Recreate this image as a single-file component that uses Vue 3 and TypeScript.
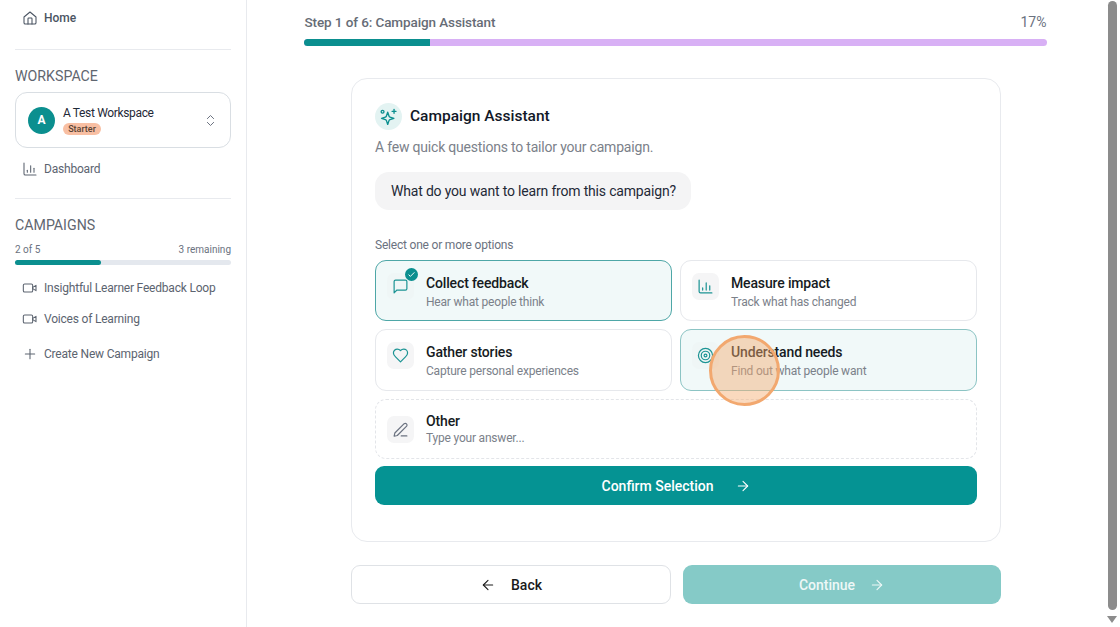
<template>
  <div class="page">
    <aside class="sidebar">
      <a class="nav home">
        <svg class="ico" viewBox="0 0 24 24"><path d="M3 10.500 12 3l9 7.500V19a2 2 0 0 1-2 2H5a2 2 0 0 1-2-2z" /><path d="M9 21v-8a1 1 0 0 1 1-1h4a1 1 0 0 1 1 1v8" /></svg>
        <span>Home</span>
      </a>
      <hr class="rule home-rule" />
      <h2 class="heading">WORKSPACE</h2>
      <div class="workspace">
        <div class="avatar">A</div>
        <div class="ws-text">
          <div class="ws-name">A Test Workspace</div>
          <span class="badge">Starter</span>
        </div>
        <svg class="updown" viewBox="0 0 24 24"><path d="m7 15 5 5 5-5" /><path d="m7 9 5-5 5 5" /></svg>
      </div>
      <a class="nav dash">
        <svg class="ico" viewBox="0 0 24 24"><path d="M3 3v16a2 2 0 0 0 2 2h16" /><path d="M8 17v-3" /><path d="M13 17V7" /><path d="M18 17v-6" /></svg>
        <span>Dashboard</span>
      </a>
      <hr class="rule" />
      <h2 class="heading camp">CAMPAIGNS</h2>
      <div class="quota"><span>2 of 5</span><span>3 remaining</span></div>
      <div class="quota-bar"><div class="quota-fill" :style="{ width: quotaPct + '%' }"></div></div>
      <a v-for="c in campaigns" :key="c" class="nav camp-item">
        <svg class="ico" viewBox="0 0 24 24"><rect x="2" y="6" width="14" height="12" rx="2" /><path d="m16 11 5-3v8l-5-3z" /></svg>
        <span>{{ c }}</span>
      </a>
      <a class="nav create">
        <svg class="ico" viewBox="0 0 24 24"><path d="M5 12h14" /><path d="M12 5v14" /></svg>
        <span>Create New Campaign</span>
      </a>
    </aside>

    <main class="main">
      <div class="steps">
        <div class="step-head">
          <span class="step-title">Step 1 of 6: Campaign Assistant</span>
          <span class="step-pct">17%</span>
        </div>
        <div class="step-bar"><div class="step-fill"></div></div>
      </div>

      <section class="card">
        <div class="card-head">
          <div class="spark">
            <svg viewBox="0 0 24 24"><path d="M11 6.500 12.600 11.400a2 2 0 0 0 1.300 1.300L18.800 14.300 13.900 15.900a2 2 0 0 0-1.300 1.300L11 22l-1.600-4.800a2 2 0 0 0-1.300-1.300L3.200 14.300l4.900-1.600a2 2 0 0 0 1.300-1.300z" /><path d="M19 3v5" /><path d="M16.500 5.500h5" /><circle cx="4.500" cy="6" r="1.800" /></svg>
          </div>
          <h1>Campaign Assistant</h1>
        </div>
        <p class="sub">A few quick questions to tailor your campaign.</p>
        <div class="bubble">What do you want to learn from this campaign?</div>
        <div class="hint">Select one or more options</div>

        <div class="options">
          <div v-for="o in options" :key="o.title" class="option" :class="o.state">
            <div class="opt-icon">
              <svg v-if="o.icon === 'chat'" viewBox="0 0 24 24"><path d="M21 15a2 2 0 0 1-2 2H7l-4 4V5a2 2 0 0 1 2-2h14a2 2 0 0 1 2 2z" /></svg>
              <svg v-else-if="o.icon === 'chart'" viewBox="0 0 24 24"><path d="M3 3v16a2 2 0 0 0 2 2h16" /><path d="M8 17v-3" /><path d="M13 17V7" /><path d="M18 17v-6" /></svg>
              <svg v-else-if="o.icon === 'heart'" viewBox="0 0 24 24"><path d="M19 14c1.500-1.500 3-3.200 3-5.500A5.500 5.500 0 0 0 16.500 3c-1.800 0-3 .5-4.500 2-1.500-1.500-2.700-2-4.500-2A5.500 5.500 0 0 0 2 8.500c0 2.300 1.500 4 3 5.500l7 7z" /></svg>
              <svg v-else viewBox="0 0 24 24"><circle cx="12" cy="12" r="10" /><circle cx="12" cy="12" r="6" /><circle cx="12" cy="12" r="2" /></svg>
              <span v-if="o.state === 'checked'" class="tick">
                <svg viewBox="0 0 24 24"><path d="M5 13l4 4L19 7" /></svg>
              </span>
            </div>
            <div>
              <div class="opt-title">{{ o.title }}</div>
              <div class="opt-desc">{{ o.desc }}</div>
            </div>
          </div>
        </div>

        <div class="option other">
          <div class="opt-icon pencil">
            <svg viewBox="0 0 24 24"><path d="M13 21h8" /><path d="M17.200 3.800a2.500 2.500 0 0 1 3.500 3.500L7.500 20.500 3 21.500l1-4.500z" /></svg>
          </div>
          <div>
            <div class="opt-title">Other</div>
            <div class="opt-desc tight">Type your answer...</div>
          </div>
        </div>

        <button class="confirm">
          <span>Confirm Selection</span>
          <svg viewBox="0 0 24 24"><path d="M5 12h14" /><path d="m12 5 7 7-7 7" /></svg>
        </button>
      </section>

      <div class="footer">
        <button class="back">
          <svg viewBox="0 0 24 24"><path d="m12 19-7-7 7-7" /><path d="M19 12H5" /></svg>
          <span>Back</span>
        </button>
        <button class="continue">
          <span>Continue</span>
          <svg viewBox="0 0 24 24"><path d="M5 12h14" /><path d="m12 5 7 7-7 7" /></svg>
        </button>
      </div>
    </main>

    <div class="click-mark"></div>
    <div class="scroll-thumb"></div>
    <div class="scroll-arrow"></div>
  </div>
</template>

<script setup lang="ts">
const quotaPct = 40

const campaigns: string[] = ['Insightful Learner Feedback Loop', 'Voices of Learning']

interface Option {
  title: string
  desc: string
  icon: string
  state: string
}

const options: Option[] = [
  { title: 'Collect feedback', desc: 'Hear what people think', icon: 'chat', state: 'checked' },
  { title: 'Measure impact', desc: 'Track what has changed', icon: 'chart', state: '' },
  { title: 'Gather stories', desc: 'Capture personal experiences', icon: 'heart', state: '' },
  { title: 'Understand needs', desc: 'Find out what people want', icon: 'target', state: 'hovered' },
]
</script>

<style>
html,
body {
  margin: 0;
  background: #fff;
  overflow: hidden;
}
</style>

<style scoped>
.page {
  position: relative;
  display: flex;
  width: 1120px;
  height: 627px;
  overflow: hidden;
  font-family: Roboto, "Noto Sans", sans-serif;
  color: #111827;
  background: #fff;
}
svg {
  fill: none;
  stroke: currentColor;
  stroke-width: 2;
  stroke-linecap: round;
  stroke-linejoin: round;
}

/* sidebar */
.sidebar {
  width: 247px;
  box-sizing: border-box;
  flex: none;
  padding: 0 15px;
  border-right: 1px solid #e8eaee;
}
.nav {
  display: flex;
  align-items: center;
  gap: 6px;
  height: 20px;
  padding-left: 7px;
  font-size: 12px;
  letter-spacing: -0.2px;
  color: #5c6470;
}
.ico {
  width: 16px;
  height: 16px;
  flex: none;
  stroke-width: 1.600;
}
.home {
  margin-top: 8px;
  font-weight: 500;
  letter-spacing: 0;
  color: #4b5563;
}
.rule {
  margin: 0;
  border: 0;
  border-top: 1px solid #e8eaee;
}
.home-rule {
  margin-top: 21px;
}
.heading {
  margin: 17px 0 0;
  font-size: 14.200px;
  line-height: 19px;
  font-weight: 400;
  color: #5f6670;
}
.workspace {
  display: flex;
  align-items: center;
  box-sizing: border-box;
  height: 56px;
  margin-top: 6px;
  padding: 0 12px;
  border: 1px solid #d9dee3;
  border-radius: 12px;
}
.avatar {
  width: 27px;
  height: 27px;
  flex: none;
  border-radius: 50%;
  background: #0b8f8f;
  color: #fff;
  font-size: 12px;
  font-weight: 700;
  line-height: 27px;
  text-align: center;
}
.ws-text {
  flex: 1;
  margin-left: 8px;
}
.ws-name {
  font-size: 12px;
  line-height: 16px;
  letter-spacing: -0.350px;
  color: #1f2937;
}
.badge {
  display: block;
  width: 38px;
  height: 12px;
  margin-top: 2px;
  border-radius: 6px;
  background: #f8bfa3;
  color: #5a4334;
  font-size: 9px;
  font-weight: 500;
  line-height: 12px;
  text-align: center;
}
.updown {
  width: 15px;
  height: 15px;
  color: #6b7280;
  stroke-width: 1.600;
}
.dash {
  margin-top: 11px;
  margin-bottom: 19px;
}
.camp {
  margin-top: 17px;
}
.quota {
  display: flex;
  justify-content: space-between;
  margin-top: 8px;
  font-size: 10px;
  line-height: 14px;
  color: #6b7280;
}
.quota-bar {
  height: 5px;
  margin-top: 3px;
  border-radius: 3px;
  background: #e4e8ee;
}
.quota-fill {
  height: 100%;
  border-radius: 3px;
  background: #0b8f8f;
}
.camp-item {
  margin-top: 11px;
}
.quota-bar + .camp-item {
  margin-top: 13px;
}
.create {
  margin-top: 15px;
}

/* main */
.main {
  width: 858px;
  flex: none;
  display: flex;
  flex-direction: column;
  align-items: center;
}
.steps {
  width: 743px;
  margin-top: 13px;
  margin-right: 2px;
}
.step-head {
  display: flex;
  justify-content: space-between;
  font-size: 14px;
  line-height: 18px;
}
.step-title {
  padding-left: 1px;
  font-size: 13.500px;
  font-weight: 500;
  letter-spacing: -0.100px;
  color: #666c76;
}
.step-pct {
  color: #6b7280;
}
.step-bar {
  height: 7px;
  margin-top: 8px;
  border-radius: 4px;
  background: #d8b0f5;
  overflow: hidden;
}
.step-fill {
  width: 17%;
  height: 100%;
  background: #0b8f8f;
}
.card {
  box-sizing: border-box;
  width: 650px;
  height: 464px;
  margin-top: 32px;
  padding: 23px 23px 0;
  border: 1px solid #e8eaee;
  border-radius: 16px;
}
.card-head {
  display: flex;
  align-items: center;
  gap: 8px;
}
.spark {
  display: flex;
  align-items: center;
  justify-content: center;
  width: 27px;
  height: 27px;
  border-radius: 50%;
  background: #e3f3f2;
  color: #0b8f8f;
}
.spark svg {
  width: 19px;
  height: 19px;
  stroke-width: 1.700;
}
h1 {
  margin: 0;
  font-size: 15.500px;
  line-height: 28px;
  font-weight: 500;
  color: #111827;
}
.sub {
  margin: 7px 0 0;
  font-size: 14px;
  line-height: 20px;
  letter-spacing: -0.200px;
  color: #7b818a;
}
.bubble {
  width: fit-content;
  box-sizing: border-box;
  height: 38px;
  margin-top: 15px;
  padding: 0 15px 0 16px;
  border-radius: 14px;
  background: #f4f4f5;
  font-size: 14px;
  line-height: 38px;
  letter-spacing: -0.180px;
  color: #1f2937;
}
.hint {
  margin-top: 27px;
  font-size: 12px;
  line-height: 16px;
  letter-spacing: -0.200px;
  color: #6b7280;
}
.options {
  display: grid;
  grid-template-columns: 297px 297px;
  grid-template-rows: 61px 62px;
  gap: 8px;
  margin-top: 7px;
}
.option {
  display: flex;
  align-items: flex-start;
  gap: 12px;
  box-sizing: border-box;
  padding: 12px 11px 0;
  border: 1px solid #e6e8ec;
  border-radius: 11px;
}
.option.checked {
  border: 1.500px solid #4ea7a7;
  background: #f1f9f9;
}
.option.hovered {
  border-color: #8cc4c4;
  background: #f1f9f9;
}
.opt-icon {
  position: relative;
  display: flex;
  align-items: center;
  justify-content: center;
  width: 27px;
  height: 27px;
  flex: none;
  border-radius: 7px;
  background: #f5f5f6;
  color: #1c9494;
}
.checked .opt-icon,
.hovered .opt-icon {
  background: #eff6f6;
}
.opt-icon svg {
  width: 17px;
  height: 17px;
  stroke-width: 1.700;
}
.tick {
  position: absolute;
  top: -5px;
  right: -4px;
  width: 13px;
  height: 13px;
  border-radius: 50%;
  background: #0b8f8f;
  color: #fff;
  display: flex;
  align-items: center;
  justify-content: center;
}
.tick svg {
  width: 9px;
  height: 9px;
  stroke-width: 2.500;
}
.opt-title {
  padding-top: 1px;
  font-size: 14px;
  line-height: 19px;
  font-weight: 500;
  letter-spacing: -0.150px;
  color: #161b22;
}
.opt-desc {
  margin-top: 1px;
  font-size: 12px;
  line-height: 17px;
  letter-spacing: -0.200px;
  color: #7b818a;
}
.opt-desc.tight {
  margin-top: -1px;
}
.other {
  align-items: center;
  height: 60px;
  margin-top: 8px;
  padding: 0 11px;
  border: 1px dashed #e3e5e9;
}
.pencil {
  color: #6b7280;
}
.confirm,
.back,
.continue {
  display: flex;
  align-items: center;
  justify-content: center;
  box-sizing: border-box;
  font-family: inherit;
  font-size: 14px;
  font-weight: 500;
}
.confirm {
  width: 100%;
  height: 39px;
  margin-top: 7px;
  gap: 21px;
  border: 0;
  border-radius: 9px;
  background: #059393;
  color: #fff;
}
.confirm svg,
.back svg,
.continue svg {
  width: 16px;
  height: 16px;
  stroke-width: 1.600;
}
.footer {
  display: grid;
  grid-template-columns: 320px 318px;
  gap: 12px;
  width: 650px;
  margin-top: 23px;
}
.back,
.continue {
  height: 39px;
  border-radius: 9px;
}
.back {
  gap: 15px;
  border: 1px solid #dfe2e6;
  background: #fff;
  color: #1a1a1a;
}
.continue {
  gap: 14px;
  border: 0;
  background: #85cac7;
  color: #eef8f7;
}

/* overlays */
.click-mark {
  position: absolute;
  left: 709px;
  top: 335px;
  box-sizing: border-box;
  width: 71px;
  height: 71px;
  border: 3px solid #f2a86f;
  border-radius: 50%;
  background: rgba(244, 170, 110, 0.450);
}
.scroll-thumb {
  position: absolute;
  left: 1108px;
  top: 1px;
  width: 9px;
  height: 609px;
  border-radius: 5px;
  background: #8c8c8c;
}
.scroll-arrow {
  position: absolute;
  left: 1107px;
  top: 616px;
  border-left: 5px solid transparent;
  border-right: 5px solid transparent;
  border-top: 7px solid #8c8c8c;
}
</style>
